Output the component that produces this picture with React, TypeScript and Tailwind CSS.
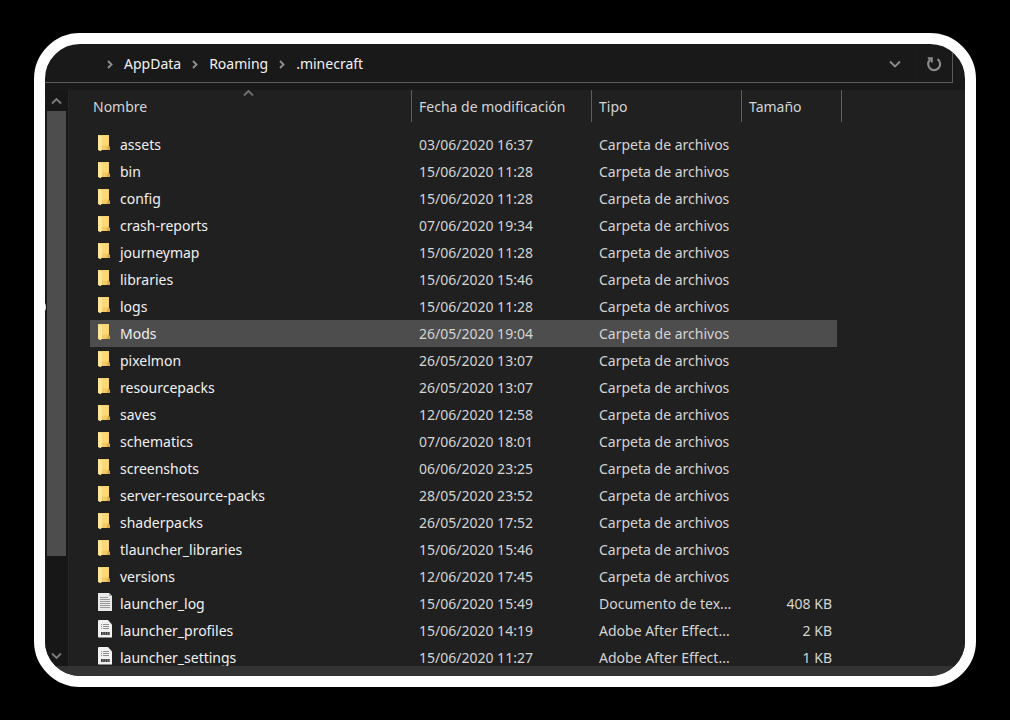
import { clsx } from 'clsx';

type FileKind = 'folder' | 'text' | 'json';

interface Entry {
  name: string;
  date: string;
  kind: FileKind;
  type: string;
  size?: string;
}

const FOLDER = 'Carpeta de archivos';

const ENTRIES: Entry[] = [
  { name: 'assets', date: '03/06/2020 16:37', kind: 'folder', type: FOLDER },
  { name: 'bin', date: '15/06/2020 11:28', kind: 'folder', type: FOLDER },
  { name: 'config', date: '15/06/2020 11:28', kind: 'folder', type: FOLDER },
  { name: 'crash-reports', date: '07/06/2020 19:34', kind: 'folder', type: FOLDER },
  { name: 'journeymap', date: '15/06/2020 11:28', kind: 'folder', type: FOLDER },
  { name: 'libraries', date: '15/06/2020 15:46', kind: 'folder', type: FOLDER },
  { name: 'logs', date: '15/06/2020 11:28', kind: 'folder', type: FOLDER },
  { name: 'Mods', date: '26/05/2020 19:04', kind: 'folder', type: FOLDER },
  { name: 'pixelmon', date: '26/05/2020 13:07', kind: 'folder', type: FOLDER },
  { name: 'resourcepacks', date: '26/05/2020 13:07', kind: 'folder', type: FOLDER },
  { name: 'saves', date: '12/06/2020 12:58', kind: 'folder', type: FOLDER },
  { name: 'schematics', date: '07/06/2020 18:01', kind: 'folder', type: FOLDER },
  { name: 'screenshots', date: '06/06/2020 23:25', kind: 'folder', type: FOLDER },
  { name: 'server-resource-packs', date: '28/05/2020 23:52', kind: 'folder', type: FOLDER },
  { name: 'shaderpacks', date: '26/05/2020 17:52', kind: 'folder', type: FOLDER },
  { name: 'tlauncher_libraries', date: '15/06/2020 15:46', kind: 'folder', type: FOLDER },
  { name: 'versions', date: '12/06/2020 17:45', kind: 'folder', type: FOLDER },
  { name: 'launcher_log', date: '15/06/2020 15:49', kind: 'text', type: 'Documento de tex...', size: '408 KB' },
  { name: 'launcher_profiles', date: '15/06/2020 14:19', kind: 'json', type: 'Adobe After Effect...', size: '2 KB' },
  { name: 'launcher_settings', date: '15/06/2020 11:27', kind: 'json', type: 'Adobe After Effect...', size: '1 KB' },
];

const CRUMBS = ['AppData', 'Roaming', '.minecraft'];
const COLUMNS = ['Nombre', 'Fecha de modificación', 'Tipo', 'Tamaño'];
const SELECTED = 'Mods';

function Chevron({ points, size, className }: { points: string; size: [number, number]; className?: string }) {
  return (
    <svg width={size[0]} height={size[1]} viewBox={`0 0 ${size[0]} ${size[1]}`} fill="none" className={className}>
      <polyline points={points} stroke="currentColor" strokeWidth="1.9" />
    </svg>
  );
}

function RefreshIcon() {
  return (
    <svg width="16" height="16" viewBox="0 0 16 16" fill="none" stroke="currentColor" strokeWidth="2.2">
      <path d="M11.6 3.2A6 6 0 1 1 4.4 3.4" />
      <path d="M1.8 2.2H5.8V6.4" strokeWidth="2" />
    </svg>
  );
}

function FileIcon({ kind }: { kind: FileKind }) {
  if (kind === 'folder') {
    return (
      <svg width="16" height="18" viewBox="0 0 16 18" className="mb-[3px]">
        <path d="M1 1H12V12.5L13 13.5V16H1Z" fill="#f3cb64" />
        <path d="M5 1.5H11.5V11.5H5Z" fill="#fbd978" />
        <path d="M11 11.6L13 13V16H9.5Z" fill="#dfa944" />
        <path d="M1 1L5 2.2V15.6L3.6 17.2L1 16Z" fill="#fde59a" />
      </svg>
    );
  }
  if (kind === 'text') {
    return (
      <svg width="16" height="18" viewBox="0 0 16 18" className="mb-[3px]">
        <path d="M1 0H12L15 3V18H1Z" fill="#e9e9e9" />
        <path d="M12 0V3H15Z" fill="#a8a8a8" />
        <path d="M3 4.5H11M3 6.5H13M3 8.5H13M3 10.5H13M3 12.5H13M3 14.5H13" stroke="#9a9a9a" strokeWidth="1" />
      </svg>
    );
  }
  return (
    <svg width="16" height="18" viewBox="0 0 16 18" className="mb-[3px]">
      <path d="M1.5 0H11L15 4.5V17.5H1.5L1 17V0.5Z" fill="#f1f1f1" />
      <path d="M4 4.5H5M6 4.5H12M4 6.5H5M6 6.5H12M4 8.5H5M6 8.5H12" stroke="#8d8d8d" strokeWidth="1" />
      {/* format label, too small to read */}
      <path d="M4 13.5H12.5" stroke="#8a8a8a" strokeWidth="3" />
      <path d="M4 13.5H12.5" stroke="#3c3c3c" strokeWidth="3" strokeDasharray="1.4 1" />
    </svg>
  );
}

function AddressBar() {
  return (
    <header className="mr-3 flex h-[39px] shrink-0 items-center border-r border-b border-[#5a5a5a] pt-[2px] pl-[62px] text-[#f2f2f2]">
      <nav className="flex items-center gap-[11px]" aria-label="Ruta">
        {CRUMBS.map((crumb) => (
          <div key={crumb} className="flex items-center gap-[11px]">
            <Chevron points="1,1 4.5,4.5 1,8" size={[6, 9]} className="text-[#8f8f8f]" />
            <a href="#">{crumb}</a>
          </div>
        ))}
      </nav>
      <div className="ml-auto flex items-center self-stretch text-[#8c8c8c]">
        <button type="button" aria-label="Ubicaciones anteriores" className="px-[14px]">
          <Chevron points="1,1.5 6,6.5 11,1.5" size={[12, 8]} />
        </button>
        <button
          type="button"
          aria-label="Actualizar"
          className="flex items-center self-stretch border-l border-[#1d1d1d] px-[10px]"
        >
          <RefreshIcon />
        </button>
      </div>
    </header>
  );
}

function ScrollRail() {
  return (
    <div className="relative flex w-6 shrink-0 flex-col border-r border-[#262626] bg-[#171717] px-[2px] text-[#7c7c7c]">
      <button type="button" aria-label="Subir" className="flex h-[21px] shrink-0 items-center justify-center">
        <Chevron points="1,6.5 5.5,2 10,6.5" size={[11, 8]} />
      </button>
      <div className="flex-1">
        <div className="h-5/6 bg-[#4d4d4d]" />
      </div>
      <button type="button" aria-label="Bajar" className="flex h-[21px] shrink-0 items-center justify-center">
        <Chevron points="1,1.5 5.5,6 10,1.5" size={[11, 8]} />
      </button>
      {/* edge of a label cut off by the navigation pane */}
      <svg width="2" height="10" viewBox="0 0 2 10" className="absolute top-[212px] left-0">
        <path d="M0 1Q2 5 0 9Z" fill="#f2f2f2" />
      </svg>
    </div>
  );
}

function FileTable() {
  return (
    <table className="ml-[21px] w-[752px] table-fixed border-collapse text-left">
      <colgroup>
        <col className="w-[322px]" />
        <col className="w-[180px]" />
        <col className="w-[150px]" />
        <col className="w-[100px]" />
      </colgroup>
      <thead>
        <tr className="h-[41px]">
          {COLUMNS.map((column, i) => (
            <th key={column} className="relative p-0 align-top font-normal text-[#d4d4d4]">
              <button
                type="button"
                className={clsx(
                  'flex h-8 w-full items-center border-r border-[#5e5e5e] pt-[2px]',
                  i === 0 ? 'pl-[3px]' : 'pl-[7px]',
                )}
              >
                {column}
              </button>
              {i === 0 && (
                <Chevron
                  points="1,5.5 5.5,1 10,5.5"
                  size={[11, 6]}
                  className="absolute top-0 left-1/2 -ml-2 text-[#707070]"
                />
              )}
            </th>
          ))}
        </tr>
      </thead>
      <tbody>
        {ENTRIES.map((entry) => {
          const cell = clsx('flex h-[27px] items-center', entry.name === SELECTED && 'bg-[#4d4d4d]');
          return (
            <tr key={entry.name} className="text-[#d4d4d4]">
              <td className="p-0">
                <div className={clsx(cell, 'gap-[7px] pl-[7px] text-[#f0f0f0]')}>
                  <FileIcon kind={entry.kind} />
                  {entry.name}
                </div>
              </td>
              <td className="p-0">
                <div className={clsx(cell, 'pl-[7px]')}>{entry.date}</div>
              </td>
              <td className="p-0">
                <div className={clsx(cell, 'pl-[7px] whitespace-nowrap')}>{entry.type}</div>
              </td>
              <td className="p-0">
                <div className={clsx(cell, 'mr-[5px] justify-end pr-[5px]')}>{entry.size}</div>
              </td>
            </tr>
          );
        })}
      </tbody>
    </table>
  );
}

export default function App() {
  return (
    <div className="flex h-screen bg-black px-[34px] py-[33px] font-['Noto_Sans',sans-serif] text-[14px] leading-5">
      <main className="flex min-w-0 flex-1 flex-col overflow-hidden rounded-[46px] border-[11px] border-white bg-[#191919]">
        <AddressBar />
        <div className="mt-[7px] flex min-h-0 flex-1">
          <ScrollRail />
          <div className="min-w-0 flex-1 overflow-hidden bg-[#202020]">
            <FileTable />
          </div>
        </div>
        <div className="h-[10px] shrink-0 bg-[#333333]" />
      </main>
    </div>
  );
}
